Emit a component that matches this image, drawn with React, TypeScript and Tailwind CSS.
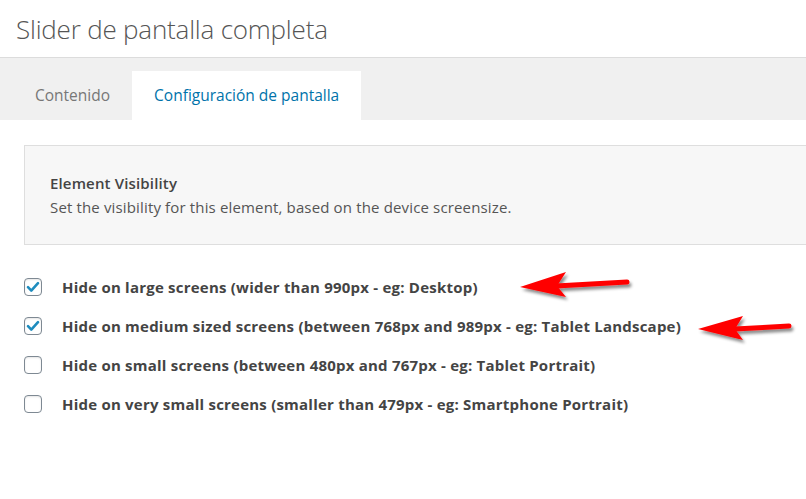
const options = [
  { label: 'Hide on large screens (wider than 990px - eg: Desktop)', checked: true },
  { label: 'Hide on medium sized screens (between 768px and 989px - eg: Tablet Landscape)', checked: true },
  { label: 'Hide on small screens (between 480px and 767px - eg: Tablet Portrait)', checked: false },
  { label: 'Hide on very small screens (smaller than 479px - eg: Smartphone Portrait)', checked: false },
];

const Checkbox = ({ checked }: { checked: boolean }) => (
  <span className="flex h-[18px] w-[18px] shrink-0 items-center justify-center rounded-[4px] border border-[#7e8993] bg-white shadow-[inset_0_1px_2px_rgba(0,0,0,0.1)]">
    {checked && (
      <svg width="14" height="14" viewBox="0 0 14 14">
        <path d="M2 7.2 L5.3 10.6 L12 3.2" fill="none" stroke="#1e8cbe" strokeWidth="2.6" strokeLinecap="round" strokeLinejoin="round" />
      </svg>
    )}
  </span>
);

const Arrows = () => (
  <svg className="pointer-events-none absolute left-0 top-0" width="806" height="499">
    <defs>
      <filter id="shadow" x="-20%" y="-50%" width="140%" height="200%">
        <feDropShadow dx="2" dy="3" stdDeviation="1.6" floodColor="#000" floodOpacity="0.45" />
      </filter>
    </defs>
    <g filter="url(#shadow)" fill="#ff0000">
      <line x1="556" y1="286" x2="627" y2="282" stroke="#ff0000" strokeWidth="5" strokeLinecap="round" />
      <polygon points="520,287 566,272 557,286 566,297" />
      <line x1="735" y1="329" x2="789" y2="326" stroke="#ff0000" strokeWidth="5" strokeLinecap="round" />
      <polygon points="698,329 743,316 735,329 743,340" />
    </g>
  </svg>
);

export default function App() {
  return (
    <div
      className="relative h-[499px] w-[806px] overflow-hidden bg-white"
      style={{ fontFamily: '"Open Sans", "Noto Sans", sans-serif' }}
    >
      <div className="flex h-[58px] items-center border-b border-[#dcdcdc] pl-[16px]">
        <h1 className="text-[26px] font-light leading-none text-[#555] tracking-[-0.2px]">Slider de pantalla completa</h1>
      </div>

      <div className="flex h-[62px] items-end bg-[#f0f0f0] pl-[13px]">
        <div className="flex h-[49px] items-center px-[22px] text-[15.5px] text-[#777]">Contenido</div>
        <div className="flex h-[49px] items-center bg-white px-[22px] text-[15.5px] text-[#0073aa]">Configuración de pantalla</div>
      </div>

      <div className="pl-[24px] pt-[25px]">
        <div className="flex h-[100px] flex-col justify-center border border-r-0 border-[#dedede] bg-[#f7f7f7] pl-[25px]">
          <div className="text-[15px] font-semibold leading-[24px] text-[#444] tracking-[0.15px]">Element Visibility</div>
          <div className="text-[15px] leading-[24px] text-[#555] tracking-[0.15px]">
            Set the visibility for this element, based on the device screensize.
          </div>
        </div>

        <div className="flex flex-col gap-[21px] pt-[33px]">
          {options.map((opt, i) => (
            <label key={i} className="flex h-[18px] items-center gap-[20px]">
              <Checkbox checked={opt.checked} />
              <span className="text-[15px] font-bold text-[#444] tracking-[0.22px]">{opt.label}</span>
            </label>
          ))}
        </div>
      </div>

      <Arrows />
    </div>
  );
}
